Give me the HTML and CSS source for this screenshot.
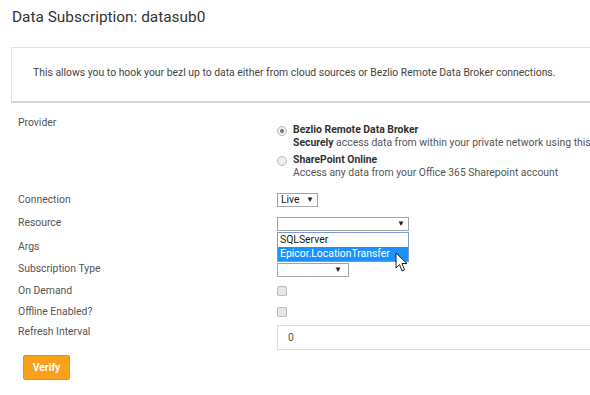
FILE: index.html
```html
<!DOCTYPE html>
<html>
<head>
<meta charset="utf-8">
<link rel="stylesheet" href="styles.css">
</head>
<body>
<div class="page">
  <h1 class="title">Data Subscription: datasub0</h1>
  <div class="panel">
    <p>This allows you to hook your bezl up to data either from cloud sources or Bezlio Remote Data Broker connections.</p>
  </div>
  <div class="form">
    <div class="row row-provider">
      <div class="label">Provider</div>
      <div class="field radios">
        <div class="radio-item">
          <span class="radio checked"></span>
          <div class="radio-text">
            <div class="opt-title">Bezlio Remote Data Broker</div>
            <div class="opt-desc"><b>Securely</b> access data from within your private network using this</div>
          </div>
        </div>
        <div class="radio-item">
          <span class="radio"></span>
          <div class="radio-text">
            <div class="opt-title">SharePoint Online</div>
            <div class="opt-desc">Access any data from your Office 365 Sharepoint account</div>
          </div>
        </div>
      </div>
    </div>
    <div class="row row-conn">
      <div class="label">Connection</div>
      <div class="field"><span class="select sel-live">Live <span class="arrow">▼</span></span></div>
    </div>
    <div class="row row-res">
      <div class="label">Resource</div>
      <div class="field">
        <span class="select sel-res"><span class="arrow">▼</span></span>
        <div class="dropdown">
          <div class="opt">SQLServer</div>
          <div class="opt active">Epicor.LocationTransfer</div>
          <svg class="cursor" width="14" height="21" viewBox="0 0 14 21"><path d="M1 1 L1 16 L4.5 12.5 L7 19 L9.5 18 L7 11.5 L12 11.5 Z" fill="#fff" stroke="#222" stroke-width="1" stroke-linejoin="round"/></svg>
        </div>
      </div>
    </div>
    <div class="row row-args">
      <div class="label">Args</div>
      <div class="field"></div>
    </div>
    <div class="row row-type">
      <div class="label">Subscription Type</div>
      <div class="field"><span class="select sel-type"><span class="arrow">▼</span></span></div>
    </div>
    <div class="row row-chk">
      <div class="label">On Demand</div>
      <div class="field"><span class="checkbox"></span></div>
    </div>
    <div class="row row-chk">
      <div class="label">Offline Enabled?</div>
      <div class="field"><span class="checkbox"></span></div>
    </div>
    <div class="row row-refresh">
      <div class="label">Refresh Interval</div>
      <div class="field"><div class="input">0</div></div>
    </div>
  </div>
  <button class="btn">Verify</button>
</div>
</body>
</html>
```
FILE: styles.css
```css
* { box-sizing: border-box; }
html, body { margin: 0; padding: 0; background: #fff; overflow: hidden; }
body { font-family: Roboto, "Noto Sans", sans-serif; color: #555; width: 590px; height: 395px; }
.page { padding: 7px 0 0 11px; }
.title { font-size: 15.4px; font-weight: 400; color: #333; margin: 0 0 0 1px; line-height: 20px; }
.panel {
  margin-top: 20px;
  width: 600px;
  height: 56px;
  border: 1px solid #e3e3e3;
  border-bottom: 2px solid #d6d6d6;
  display: flex;
  align-items: center;
  padding-left: 21px;
  padding-bottom: 4px;
}
.panel p { margin: 0; font-size: 10.4px; color: #444; }
.form { padding-left: 7px; margin-top: 13px; font-size: 10.4px; }
.row { display: flex; font-size: 10.4px; }
.label { width: 259px; flex: none; color: #555; line-height: 14px; }
.field { flex: 1; position: relative; }
.row-provider { height: 72px; }
.radios { padding-top: 8px; }
.radio-item { display: flex; align-items: flex-start; margin-bottom: 5px; }
.radio {
  width: 10px; height: 10px; border-radius: 50%;
  border: 1px solid #bbb; background: #eee; margin: 2px 6px 0 0; flex: none;
  position: relative;
}
.radio.checked::after {
  content: ""; position: absolute; left: 2px; top: 2px; width: 4px; height: 4px; border-radius: 50%; background: #777;
}
.radio-text { line-height: 12.5px; white-space: nowrap; }
.opt-title { font-weight: 700; color: #333; }
.opt-desc { color: #555; }
.opt-desc b { color: #333; }
.row-conn { height: 23px; align-items: center; }
.select {
  display: inline-flex; align-items: center; justify-content: space-between;
  height: 14px; border: 1px solid #a5a5a5; font-size: 10.4px; color: #222; padding: 0 3px 0 3px; background: #fff; line-height: 12px;
}
.arrow { font-size: 8px; color: #222; }
.sel-live { width: 41px; }
.row-res { height: 24px; align-items: center; }
.sel-res { width: 132px; justify-content: flex-end; }
.dropdown {
  position: absolute; left: 0; top: 16px; width: 132px; border: 1px solid #7a9cd3; background: #fff; z-index: 2;
}
.opt { height: 14px; line-height: 14px; padding-left: 2px; color: #222; font-size: 10.4px; }
.opt.active { background: #1e90ff; color: #fff; }
.cursor { position: absolute; left: 117px; top: 19px; }
.row-args { height: 23px; align-items: center; }
.row-type { height: 22px; align-items: center; }
.sel-type { width: 72px; justify-content: flex-end; padding-right: 6px; }
.row-chk { height: 21px; align-items: center; }
.checkbox { display: block; width: 10px; height: 10px; border: 1px solid #bbb; border-radius: 2px; background: #e6e6e6; }
.row-refresh { height: 26px; align-items: flex-start; margin-top: 3px; }
.input { height: 25px; border: 1px solid #ddd; width: 340px; padding-left: 10px; line-height: 23px; color: #555; font-size: 10.4px; }
.btn {
  margin: 4px 0 0 12px; width: 47px; height: 25px; background: #f9a11b; border: 1px solid #e8901a; border-radius: 2px;
  color: #fff; font-family: Roboto, sans-serif; font-weight: 700; font-size: 10.4px; padding: 0;
}
```
